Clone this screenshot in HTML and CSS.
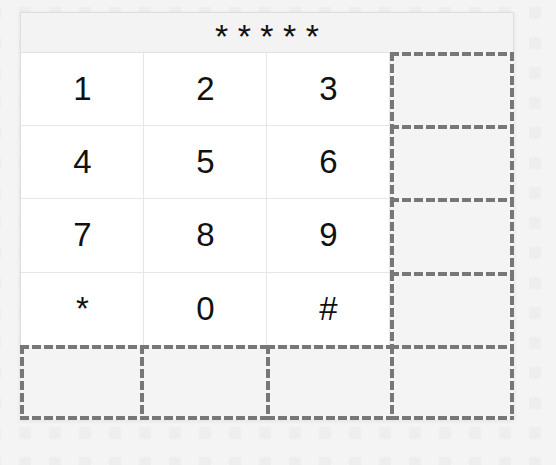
FILE: index.html
```html
<!DOCTYPE html>
<html>
<head>
<meta charset="utf-8">
<link rel="stylesheet" href="styles.css">
</head>
<body>
<div class="panel">
  <div class="display">* * * * *</div>
  <div class="pad">
    <div class="key">1</div>
    <div class="key">2</div>
    <div class="key">3</div>
    <div class="slot side"></div>
    <div class="key">4</div>
    <div class="key">5</div>
    <div class="key">6</div>
    <div class="slot side"></div>
    <div class="key">7</div>
    <div class="key">8</div>
    <div class="key">9</div>
    <div class="slot side"></div>
    <div class="key">*</div>
    <div class="key">0</div>
    <div class="key">#</div>
    <div class="slot side"></div>
    <div class="slot low b1"></div>
    <div class="slot low b2"></div>
    <div class="slot low b3"></div>
    <div class="slot low side"></div>
  </div>
</div>
</body>
</html>
```
FILE: styles.css
```css
html, body {
  margin: 0;
  height: 100%;
}
body {
  padding: 12px 0 0 20px;
  box-sizing: border-box;
  background-color: #f4f4f4;
  background-image: conic-gradient(at 12px 12px, #f4f4f4 75%, #eeeeee 0);
  background-size: 30px 30px;
  background-position: 19px 7px;
  font-family: "Liberation Sans", Arial, sans-serif;
}
.panel {
  width: 494px;
  height: 408px;
  box-sizing: border-box;
  border: 1px solid #dedede;
  background: #fff;
  box-shadow: 0 1px 4px rgba(0, 0, 0, 0.08);
  display: flex;
  flex-direction: column;
}
.display {
  height: 40px;
  box-sizing: border-box;
  border-bottom: 1px solid #e2e2e2;
  background: #f3f3f3;
  text-align: center;
  font-size: 34px;
  line-height: 46px;
  color: #111;
}
.pad {
  flex: 1;
  display: grid;
  grid-template-columns: repeat(4, 1fr);
  grid-template-rows: repeat(5, 1fr);
}
.key {
  display: flex;
  align-items: center;
  justify-content: center;
  padding-left: 1px;
  font-size: 33px;
  color: #111;
  border-right: 1px solid #e6e6e6;
  border-bottom: 1px solid #e6e6e6;
  background: #fff;
}
.slot {
  position: relative;
  z-index: 1;
  background:
    repeating-linear-gradient(90deg, #777 0 9px, transparent 9px 12px) left top / 100% 4px no-repeat,
    repeating-linear-gradient(90deg, #777 0 9px, transparent 9px 12px) left bottom / 100% 4px no-repeat,
    repeating-linear-gradient(180deg, #777 0 9px, transparent 9px 12px) left top / 4px 100% no-repeat,
    repeating-linear-gradient(180deg, #777 0 9px, transparent 9px 12px) right top / 4px 100% no-repeat,
    #f4f4f4;
  margin: -1px 0 -3px 0;
}
.side {
  margin-right: -1px;
}
.low {
  margin-bottom: -1px;
}
.b1 {
  margin-left: -1px;
}
.b2 {
  margin-left: -4px;
  margin-right: -3px;
}
.b3 {
  margin-left: -1px;
  margin-right: -4px;
}
```
